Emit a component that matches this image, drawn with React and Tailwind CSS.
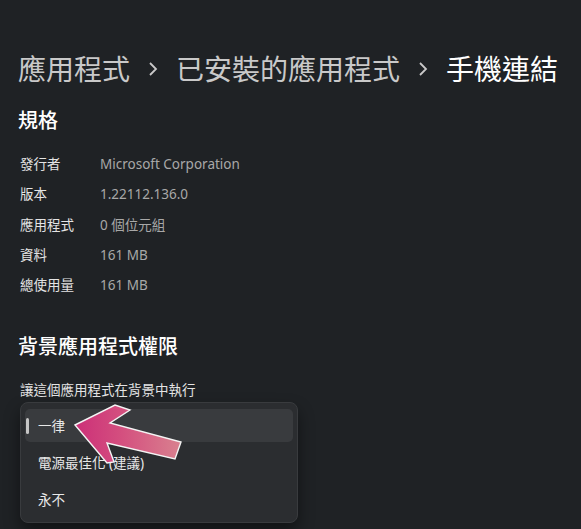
const FONT = { fontFamily: '"Noto Sans", "Noto Sans CJK TC", sans-serif' }

const SPECS = [
  ['發行者', 'Microsoft Corporation'],
  ['版本', '1.22112.136.0'],
  ['應用程式', '0 個位元組'],
  ['資料', '161 MB'],
  ['總使用量', '161 MB'],
]

const OPTIONS = ['一律', '電源最佳化 (建議)', '永不']

function Chevron() {
  return (
    <svg width="12" height="16" viewBox="0 0 12 16" className="shrink-0">
      <polyline points="3,2 9,8 3,14" fill="none" stroke="#c9c9c9" strokeWidth="1.8" />
    </svg>
  )
}

function Arrow() {
  return (
    <svg
      width="581"
      height="529"
      viewBox="0 0 581 529"
      className="pointer-events-none absolute left-0 top-0"
    >
      <defs>
        <linearGradient id="arrowFill" x1="75" y1="0" x2="181" y2="0" gradientUnits="userSpaceOnUse">
          <stop offset="0" stopColor="#cc2f78" />
          <stop offset="0.45" stopColor="#d4507f" />
          <stop offset="1" stopColor="#d9818f" />
        </linearGradient>
      </defs>
      <polygon
        points="75,425 115,405 130,410 110,423 181,442 175,459 107,443 114,462 107,463"
        fill="url(#arrowFill)"
        stroke="#f4f4f4"
        strokeWidth="1.4"
        strokeLinejoin="miter"
      />
    </svg>
  )
}

export default function App() {
  return (
    <div className="relative h-[529px] w-[581px] overflow-hidden bg-[#1f2225]" style={FONT}>
      <div className="pl-[18px] pt-[49px]">
        <div className="flex h-[40px] items-center gap-[17px] text-[28px] leading-none">
          <span className="text-[#c9c9c9]">應用程式</span>
          <Chevron />
          <span className="text-[#c9c9c9]">已安裝的應用程式</span>
          <Chevron />
          <span className="text-white">手機連結</span>
        </div>

        <h2 className="mt-[18px] flex h-[28px] items-center text-[20px] font-medium text-white">規格</h2>

        <div className="mt-[14px]">
          {SPECS.map(([label, value]) => (
            <div key={label} className="flex h-[30.25px] items-center text-[13.5px]">
              <span className="w-[82px] pl-[2px] text-[#e4e4e4]">{label}</span>
              <span className="text-[#a8a8a8]">{value}</span>
            </div>
          ))}
        </div>

        <h2 className="mt-[33px] flex h-[28px] items-center text-[20px] font-medium text-white">
          背景應用程式權限
        </h2>

        <p className="ml-[2px] mt-[19px] flex h-[20px] items-center text-[13.5px] text-[#e4e4e4]">
          讓這個應用程式在背景中執行
        </p>

        <ul className="ml-[2px] mt-[2px] w-[278px] rounded-[8px] border border-[#393b3e] bg-[#2b2d30] px-[4px] py-[4px] shadow-[0_8px_16px_rgba(0,0,0,0.45)]">
          {OPTIONS.map((option, index) => (
            <li key={option} className="h-[37px] py-[2px]">
              <div
                className={`relative flex h-full items-center rounded-[5px] pl-[13px] text-[13.5px] text-[#e8e8e8] ${
                  index === 0 ? 'bg-[#393b3e]' : ''
                }`}
              >
                {index === 0 && (
                  <span className="absolute left-[1px] top-1/2 h-[16px] w-[3px] -translate-y-1/2 rounded-full bg-[#c5c5c5]" />
                )}
                {option}
              </div>
            </li>
          ))}
        </ul>
      </div>

      <Arrow />
    </div>
  )
}
